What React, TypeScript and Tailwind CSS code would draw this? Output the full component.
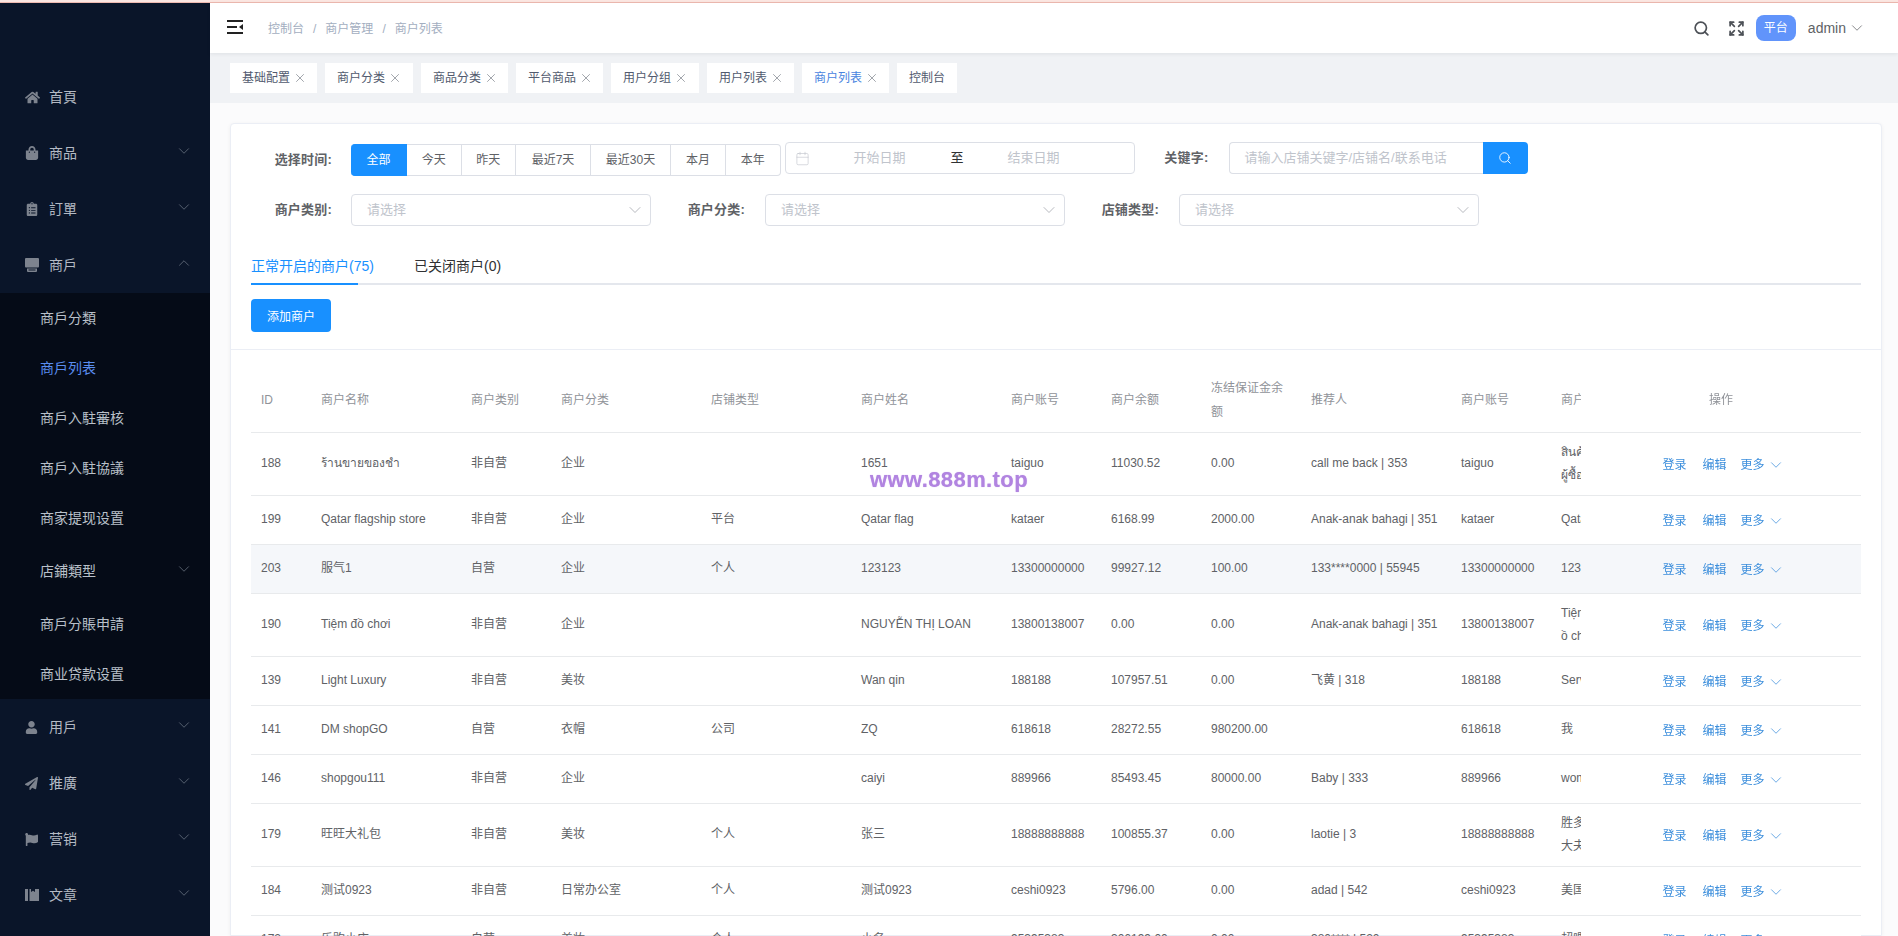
import React from "react";
import { ChevronDown, ChevronUp, X, Search, Expand, Calendar } from "lucide-react";
import { FaHome, FaShoppingBag, FaClipboardList, FaUser, FaPaperPlane, FaFlag } from "react-icons/fa";

const StoreIcon = () => (
  <svg width="14" height="14" viewBox="0 0 14 14" fill="currentColor">
    <path d="M1 0h12a1 1 0 0 1 1 1v7.5a1 1 0 0 1-1 1H1a1 1 0 0 1-1-1V1a1 1 0 0 1 1-1z" />
    <path d="M2 10.5h10V13a1 1 0 0 1-1 1H3a1 1 0 0 1-1-1zM3.5 11.5v1h7v-1z" fillRule="evenodd" />
  </svg>
);

const BookIcon = () => (
  <svg width="14" height="12" viewBox="0 0 14 12" fill="currentColor">
    <path d="M0 0h3v12H0zM4.5 0h1.5v3l2 -1.2L10 3V0h4v12H4.5z" />
  </svg>
);

const Hamburger = () => (
  <svg width="16" height="14" viewBox="0 0 16 14" fill="#222">
    <rect x="0" y="0" width="16" height="2" />
    <rect x="0" y="6" width="10" height="2" />
    <rect x="0" y="12" width="16" height="2" />
    <path d="M16 4v6l-4-3z" />
  </svg>
);

type Menu = { label: string; icon: React.ReactNode; arrow?: "down" | "up" };

const topMenus: Menu[] = [
  { label: "首頁", icon: <FaHome size={15} /> },
  { label: "商品", icon: <FaShoppingBag size={14} />, arrow: "down" },
  { label: "訂單", icon: <FaClipboardList size={14} />, arrow: "down" },
  { label: "商戶", icon: <StoreIcon />, arrow: "up" },
];

const bottomMenus: Menu[] = [
  { label: "用戶", icon: <FaUser size={13} />, arrow: "down" },
  { label: "推廣", icon: <FaPaperPlane size={13} />, arrow: "down" },
  { label: "营销", icon: <FaFlag size={13} />, arrow: "down" },
  { label: "文章", icon: <BookIcon />, arrow: "down" },
];

function MenuRow({ m }: { m: Menu }) {
  return (
    <div className="flex h-14 items-center pl-[25px] pr-[17px] text-sm text-[#b4bac4]">
      <span className="flex w-6 shrink-0 text-[#7d838e]">{m.icon}</span>
      <span>{m.label}</span>
      {m.arrow === "down" && <ChevronDown size={18} strokeWidth={1} className="ml-auto -mt-1 text-[#6f7885]" />}
      {m.arrow === "up" && <ChevronUp size={18} strokeWidth={1} className="ml-auto -mt-1 text-[#6f7885]" />}
    </div>
  );
}

function SubRow({ label, active }: { label: string; active?: boolean }) {
  return (
    <div className={`flex h-[50px] items-center pl-10 text-sm ${active ? "text-[#5a8df0]" : "text-[#b9c0c9]"}`}>{label}</div>
  );
}

const tags = [
  { t: "基础配置", close: true, w: "w-[87px]" },
  { t: "商户分类", close: true, w: "w-[88px]" },
  { t: "商品分类", close: true, w: "w-[87px]" },
  { t: "平台商品", close: true, w: "w-[87px]" },
  { t: "用户分组", close: true, w: "w-[88px]" },
  { t: "用户列表", close: true, w: "w-[87px]" },
  { t: "商户列表", close: true, active: true, w: "w-[87px]" },
  { t: "控制台", close: false, w: "w-[60px]" },
];

const radios = [
  { t: "全部", w: "w-14" },
  { t: "今天", w: "w-[54.5px]" },
  { t: "昨天", w: "w-[54.5px]" },
  { t: "最近7天", w: "w-[75px]" },
  { t: "最近30天", w: "w-[80px]" },
  { t: "本月", w: "w-[55px]" },
  { t: "本年", w: "w-[54.5px]" },
];

const widths = ["w-[60px]", "w-[150px]", "w-[90px]", "w-[150px]", "w-[150px]", "w-[150px]", "w-[100px]", "w-[100px]", "w-[100px]", "w-[150px]", "w-[100px]", "w-[200px]", "w-[280px]"];
const heads = ["ID", "商户名称", "商户类别", "商户分类", "店铺类型", "商户姓名", "商户账号", "商户余额", "冻结保证金余额", "推荐人", "商户账号", "商户简介"];

type Row = { c: string[]; last: string[]; hover?: boolean };
const rows: Row[] = [
  { c: ["188", "ร้านขายของชำ", "非自营", "企业", "", "1651", "taiguo", "11030.52", "0.00", "call me back | 353", "taiguo"], last: ["สินค้าดี", "ผู้ซื้อดี"] },
  { c: ["199", "Qatar flagship store", "非自营", "企业", "平台", "Qatar flag", "kataer", "6168.99", "2000.00", "Anak-anak bahagi | 351", "kataer"], last: ["Qatar flagship"] },
  { c: ["203", "服气1", "自营", "企业", "个人", "123123", "13300000000", "99927.12", "100.00", "133****0000 | 55945", "13300000000"], last: ["123123"], hover: true },
  { c: ["190", "Tiệm đồ chơi", "非自营", "企业", "", "NGUYỄN THỊ LOAN", "13800138007", "0.00", "0.00", "Anak-anak bahagi | 351", "13800138007"], last: ["Tiệm đ", "ồ chơi"] },
  { c: ["139", "Light Luxury", "非自营", "美妆", "", "Wan qin", "188188", "107957.51", "0.00", "飞黄 | 318", "188188"], last: ["Service"] },
  { c: ["141", "DM shopGO", "自营", "衣帽", "公司", "ZQ", "618618", "28272.55", "980200.00", "", "618618"], last: ["我"] },
  { c: ["146", "shopgou111", "非自营", "企业", "", "caiyi", "889966", "85493.45", "80000.00", "Baby | 333", "889966"], last: ["women"] },
  { c: ["179", "旺旺大礼包", "非自营", "美妆", "个人", "张三", "18888888888", "100855.37", "0.00", "laotie | 3", "18888888888"], last: ["胜多负少", "大夫"] },
  { c: ["184", "测试0923", "非自营", "日常办公室", "个人", "测试0923", "ceshi0923", "5796.00", "0.00", "adad | 542", "ceshi0923"], last: ["美国"] },
  { c: ["172", "乐购小店", "自营", "美妆", "个人", "小名", "95395383", "306199.00", "0.00", "380**** | 520", "95395383"], last: ["超喂"] },
];

function Label({ children, className = "" }: { children: React.ReactNode; className?: string }) {
  return <div className={`flex h-8 shrink-0 items-center justify-end whitespace-nowrap text-[13px] font-bold tracking-[0.2px] text-[#606266] ${className}`}>{children}</div>;
}

function SelectBox({ className = "" }: { className?: string }) {
  return (
    <div className={`flex h-8 w-[300px] shrink-0 items-center justify-between rounded border border-[#dcdfe6] bg-white pl-[15px] pr-[5px] ${className}`}>
      <span className="text-[13px] text-[#c0c4cc]">请选择</span>
      <ChevronDown size={20} strokeWidth={1} className="text-[#a8abb2]" />
    </div>
  );
}

export default function App() {
  return (
    <div className="flex h-screen flex-col overflow-hidden bg-white [font-family:'Liberation_Sans','Noto_Sans_CJK_SC','Noto_Sans',sans-serif]">
      <div className="h-[3px] shrink-0 border-b border-[#eeb9b0] bg-[#fbe6e1]" />
      <div className="flex min-h-0 flex-1">
        <aside className="w-[210px] shrink-0 overflow-hidden bg-[#0a1529]">
          <div className="h-[66px]" />
          {topMenus.map((m) => (
            <MenuRow key={m.label} m={m} />
          ))}
          <div className="bg-[#050b17]">
            <SubRow label="商戶分類" />
            <SubRow label="商戶列表" active />
            <SubRow label="商戶入駐審核" />
            <SubRow label="商戶入駐協議" />
            <SubRow label="商家提现设置" />
            <div className="flex h-14 items-center pl-10 pr-[17px] text-sm text-[#b9c0c9]">
              <span>店鋪類型</span>
              <ChevronDown size={18} strokeWidth={1} className="ml-auto -mt-1 text-[#6f7885]" />
            </div>
            <SubRow label="商戶分賬申請" />
            <SubRow label="商业贷款设置" />
          </div>
          {bottomMenus.map((m) => (
            <MenuRow key={m.label} m={m} />
          ))}
        </aside>

        <main className="flex min-w-0 flex-1 flex-col bg-[#fbfbfc]">
          <header className="relative z-10 flex h-[50px] shrink-0 items-center bg-white pl-[17px] pr-8 shadow-[0_1px_4px_rgba(0,21,41,0.08)]">
            <div className="-mt-[2px]">
              <Hamburger />
            </div>
            <div className="ml-[25px] flex items-center pt-[2px] text-xs text-[#a3aec0]">
              <span>控制台</span>
              <span className="mx-[9px]">/</span>
              <span>商户管理</span>
              <span className="mx-[9px]">/</span>
              <span>商户列表</span>
            </div>
            <div className="ml-auto flex items-center">
              <Search size={17} strokeWidth={2.4} className="text-[#4d5157]" />
              <Expand size={17} strokeWidth={2.4} className="ml-[18px] text-[#4d5157]" />
              <span className="ml-[11px] flex h-[26px] w-[40px] items-center justify-center rounded-lg bg-[#6194fb] text-xs text-white">平台</span>
              <span className="ml-3 text-sm text-[#606266]">admin</span>
              <ChevronDown size={18} strokeWidth={1} className="ml-[2px] text-[#606266]" />
            </div>
          </header>

          <div className="flex h-[50px] shrink-0 items-center gap-2 bg-[#f0f2f5] pl-5">
            {tags.map((t, i) => (
              <div key={i} className={`flex h-[30px] shrink-0 items-center bg-white pl-3 text-xs ${t.w} ${t.active ? "text-[#4a84e0]" : "text-[#515a6e]"}`}>
                <span>{t.t}</span>
                {t.close && <X size={14} strokeWidth={1.2} className="ml-[3px] text-[#7a8088]" />}
              </div>
            ))}
          </div>

          <div className="ml-5 mr-4 mt-5 min-h-0 flex-1 rounded-t border border-[#ebeef5] bg-white px-5 pt-[18px] shadow-[0_1px_4px_rgba(0,0,0,0.05)]">
            <div className="flex items-start">
              <Label className="mt-[2px] w-[81px]">选择时间:</Label>
              <div className="ml-[19px] mt-[2px] flex h-8 text-xs">
                {radios.map((r, i) => (
                  <div
                    key={r.t}
                    className={`flex h-8 items-center justify-center border border-l-0 ${r.w} ${
                      i === 0 ? "rounded-l border-[#1890ff] bg-[#1890ff] text-white" : "border-[#dcdfe6] bg-white text-[#606266]"
                    } ${i === radios.length - 1 ? "rounded-r" : ""}`}
                  >
                    {r.t}
                  </div>
                ))}
              </div>
              <div className="ml-1 flex h-8 w-[350px] items-center rounded border border-[#dcdfe6] pl-[9px] text-[13px] text-[#c0c4cc]">
                <Calendar size={15} strokeWidth={1} />
                <span className="ml-11">开始日期</span>
                <span className="ml-[45px] text-[#303133]">至</span>
                <span className="ml-11">结束日期</span>
              </div>
              <Label className="ml-[29px] w-[45px]">关键字:</Label>
              <div className="ml-5 flex h-8 w-[254px] items-center rounded-l border border-r-0 border-[#dcdfe6] pl-[15px] text-[13px] text-[#c0c4cc]">请输入店铺关键字/店铺名/联系电话</div>
              <div className="flex h-8 w-[45px] items-center justify-center rounded-r bg-[#1890ff] text-white">
                <Search size={14} strokeWidth={1.5} />
              </div>
            </div>

            <div className="mt-[18px] flex items-start">
              <Label className="w-[81px]">商户类别:</Label>
              <SelectBox className="ml-[19px]" />
              <Label className="ml-[37px] w-[57px]">商户分类:</Label>
              <SelectBox className="ml-5" />
              <Label className="ml-9 w-[58px]">店铺类型:</Label>
              <SelectBox className="ml-5" />
            </div>

            <div className="mt-[21px] flex h-[38px] border-b-2 border-[#e4e7ed] text-sm">
              <div className="-mb-[2px] h-[38px] w-[107px] whitespace-nowrap border-b-2 border-[#1890ff] pt-[9px] text-[#1890ff]">正常开启的商户(75)</div>
              <div className="ml-14 whitespace-nowrap pt-[9px] text-[#303133]">已关闭商户(0)</div>
            </div>

            <button className="mt-[14px] block h-[33px] w-20 rounded bg-[#1890ff] pt-[2px] text-xs text-white">添加商户</button>

            <div className="-mx-5 mt-[17px] border-t border-[#ebeef5]" />

            <div className="relative overflow-hidden pt-[19px]">
              <table className="w-[1780px] table-fixed border-collapse text-xs">
                <colgroup>
                  {widths.map((w, i) => (
                    <col key={i} className={w} />
                  ))}
                </colgroup>
                <thead>
                  <tr>
                    {heads.map((h, i) => (
                      <th key={i} className="h-[63px] border-b border-[#e8eaec] px-[10px] text-left align-middle text-xs font-normal leading-6 text-[#909399]">
                        {h}
                      </th>
                    ))}
                    <th className="sticky right-0 border-b border-[#e8eaec] bg-white text-center text-xs font-normal text-[#909399] shadow-[-4px_0_6px_rgba(0,0,0,0.04)]">操作</th>
                  </tr>
                </thead>
                <tbody>
                  {rows.map((r) => (
                    <tr key={r.c[0]} className={r.hover ? "bg-[#f5f7fa]" : ""}>
                      {r.c.map((v, i) => (
                        <td key={i} className="h-[49px] overflow-hidden border-b border-[#e8eaec] px-[10px] py-2 align-middle leading-[23px] whitespace-nowrap text-[#606266]">
                          {v}
                        </td>
                      ))}
                      <td className="overflow-hidden border-b border-[#e8eaec] px-[10px] py-2 align-middle leading-[23px] whitespace-nowrap text-[#606266]">
                        {r.last.map((l) => (
                          <div key={l}>{l}</div>
                        ))}
                      </td>
                      <td className={`sticky right-0 border-b border-[#e8eaec] pt-[2px] shadow-[-4px_0_6px_rgba(0,0,0,0.04)] ${r.hover ? "bg-[#f5f7fa]" : "bg-white"}`}>
                        <div className="flex items-center justify-center pl-[5px] text-xs text-[#3d8fdc]">
                          <span>登录</span>
                          <span className="ml-4">编辑</span>
                          <span className="ml-[14px]">更多</span>
                          <ChevronDown size={18} strokeWidth={1} className="ml-[2px]" />
                        </div>
                      </td>
                    </tr>
                  ))}
                </tbody>
              </table>
              <div className="absolute left-[619px] top-[116px] text-[22px] font-bold leading-7 tracking-[0.4px] text-[#b184e0] [text-shadow:0_0_1px_#c9a6ec]">www.888m.top</div>
            </div>
          </div>
        </main>
      </div>
    </div>
  );
}
